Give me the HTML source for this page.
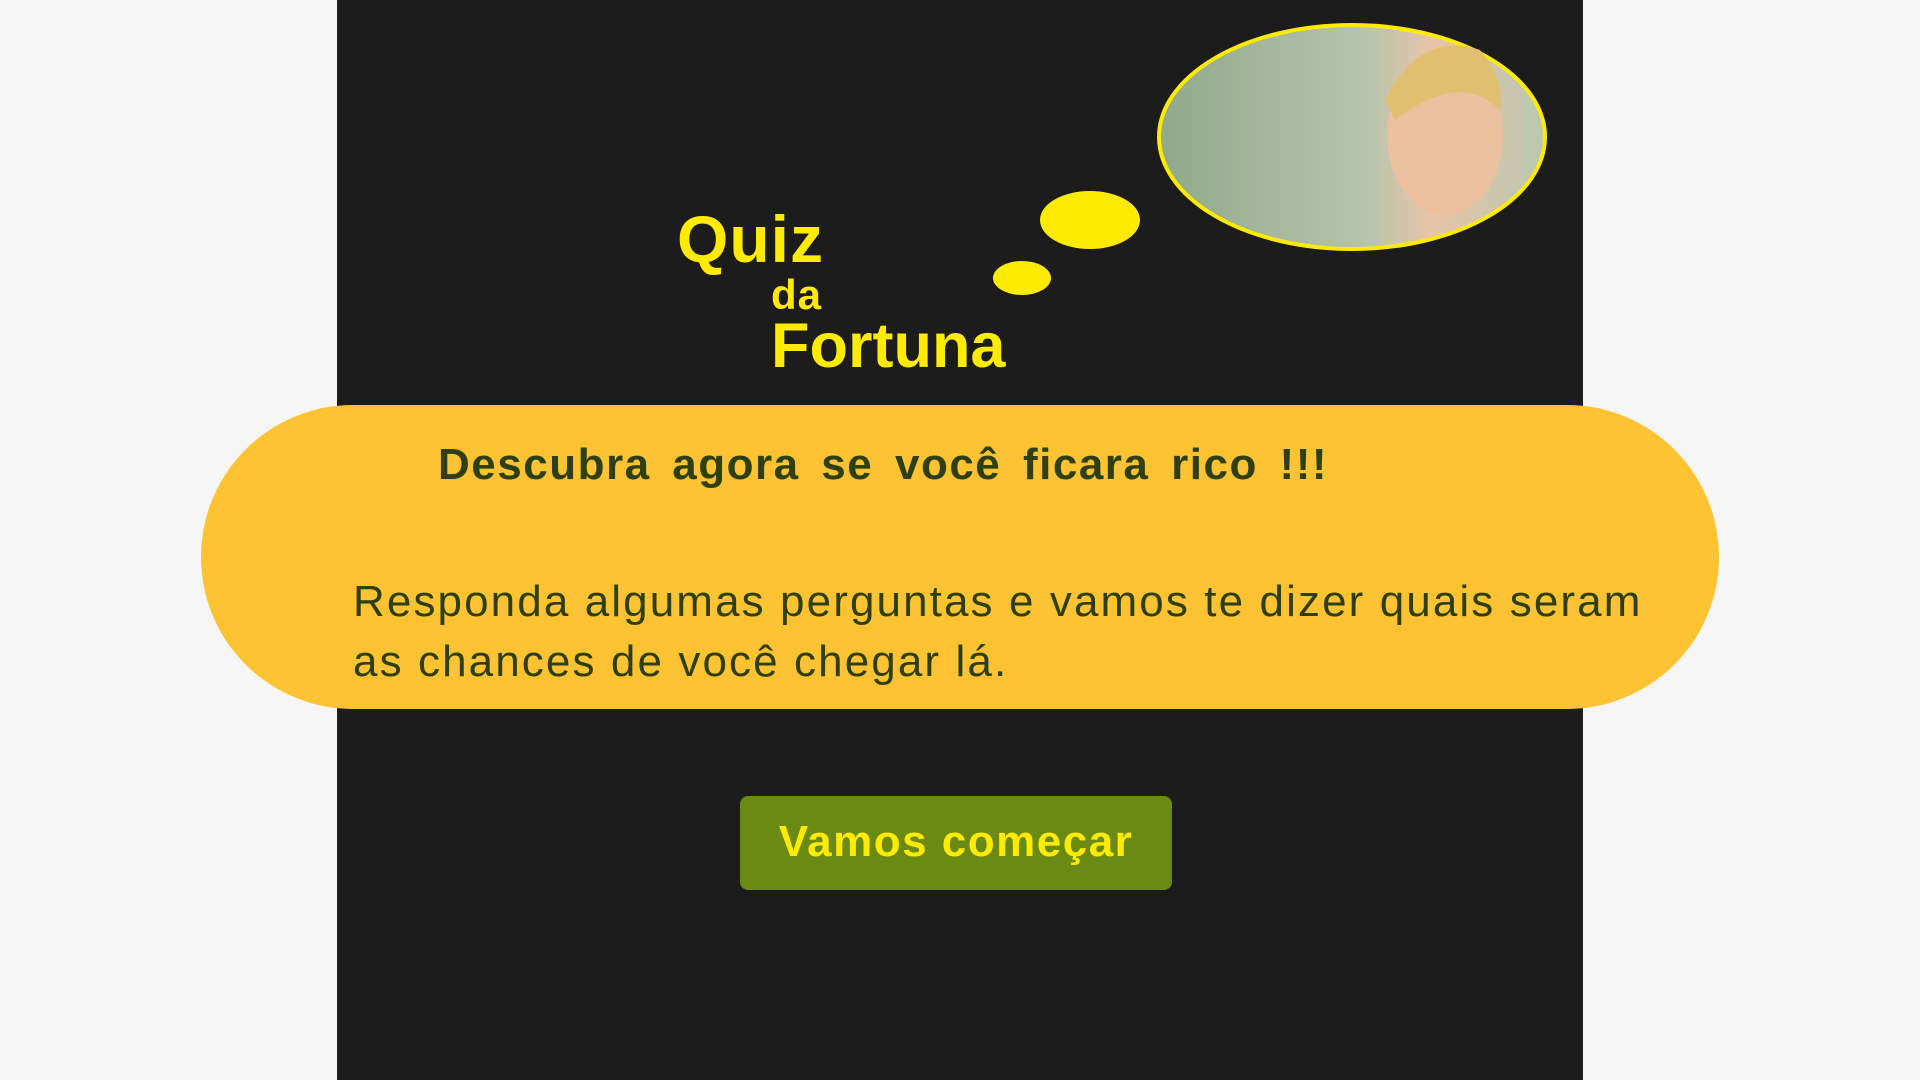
<!DOCTYPE html>
<html><head><meta charset="utf-8"><style>
html,body{margin:0;padding:0;width:1920px;height:1080px;overflow:hidden;background:#f6f6f6;font-family:"Liberation Sans",sans-serif}
#panel{position:absolute;left:337px;top:0;width:1246px;height:1080px;background:#1c1c1c}
.logo{position:absolute;color:#ffeb00;font-weight:bold;line-height:1;letter-spacing:1px}
#pill{position:absolute;left:201px;top:405px;width:1518px;height:304px;border-radius:152px;background:#fdc332}
#h{position:absolute;left:438px;top:440px;font-size:44px;font-weight:bold;color:#2d3f13;word-spacing:8px;letter-spacing:1.5px}
#p{position:absolute;left:353px;top:572px;font-size:44px;line-height:60px;color:#2d3f13;width:1335px;letter-spacing:2.1px}
#btn{position:absolute;left:740px;top:796px;width:432px;height:94px;background:#6b8a13;border-radius:8px;color:#ffeb00;font-size:44px;font-weight:bold;text-align:center;line-height:92px;letter-spacing:1.5px}
</style></head><body>
<div id="panel"></div>
<div class="logo" style="left:677px;top:206px;font-size:66px">Quiz</div>
<div class="logo" style="left:771px;top:274px;font-size:42px">da</div>
<div class="logo" style="left:771px;top:315px;font-size:63px;letter-spacing:0">Fortuna</div>
<svg style="position:absolute;left:0;top:0" width="1920" height="1080">
<ellipse cx="1090" cy="220" rx="50" ry="29" fill="#ffeb00"/>
<ellipse cx="1022" cy="278" rx="29" ry="17" fill="#ffeb00"/>
<defs><linearGradient id="g" x1="0" x2="1"><stop offset="0" stop-color="#8fa98a"/><stop offset="0.55" stop-color="#b9c4ad"/><stop offset="0.7" stop-color="#e8c4a8"/><stop offset="1" stop-color="#b8c8b0"/></linearGradient></defs>
<ellipse cx="1352" cy="137" rx="193" ry="112" fill="url(#g)" stroke="#ffeb00" stroke-width="4"/>
<ellipse cx="1445" cy="135" rx="58" ry="80" fill="#ebc09e"/>
<path d="M1385 100 Q1420 30 1480 50 Q1505 80 1500 110 Q1460 70 1395 120Z" fill="#e0c070"/>
</svg>
<div id="pill"></div>
<div id="h">Descubra agora se você ficara rico !!!</div>
<div id="p">Responda algumas perguntas e vamos te dizer quais seram as chances de você chegar lá.</div>
<div id="btn">Vamos começar</div>
</body></html>
